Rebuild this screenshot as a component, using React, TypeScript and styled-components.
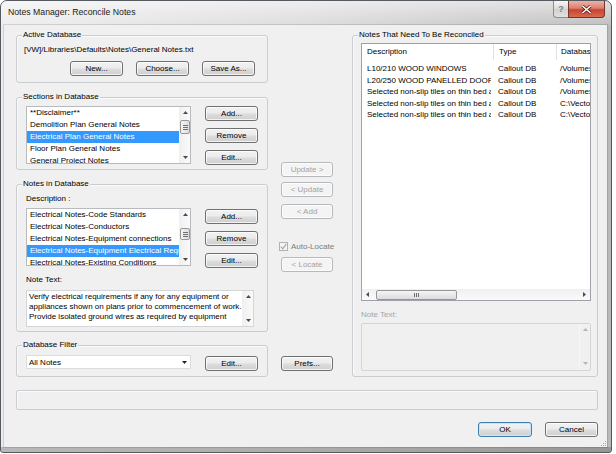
import React from 'react';
import styled, { createGlobalStyle } from 'styled-components';

const GlobalStyle = createGlobalStyle`
  html, body {
    margin: 0;
    padding: 0;
    background: #ffffff;
  }
  body {
    font-family: "Liberation Sans", Arial, sans-serif;
    font-size: 8px;
    color: #000;
  }
  * {
    box-sizing: border-box;
  }
`;

type Dir = 'up' | 'down' | 'left' | 'right';

const sections = [
  '**Disclaimer**',
  'Demolition Plan General Notes',
  'Electrical Plan General Notes',
  'Floor Plan General Notes',
  'General Project Notes',
];

const notes = [
  'Electrical Notes-Code Standards',
  'Electrical Notes-Conductors',
  'Electrical Notes-Equipment connections',
  'Electrical Notes-Equipment Electrical Requirements',
  'Electrical Notes-Existing Conditions',
];

const noteLines = [
  'Verify electrical requirements if any for any equipment or',
  'appliances shown on plans prior to commencement of work.',
  'Provide isolated ground wires as required by equipment',
];

const reconcile = [
  { desc: 'L10/210 WOOD WINDOWS', type: 'Callout DB', db: '/Volumes/Data/Notes.txt' },
  { desc: 'L20/250 WOOD PANELLED DOORS', type: 'Callout DB', db: '/Volumes/Data/Notes.txt' },
  { desc: 'Selected non-slip tiles on thin bed adhesive', type: 'Callout DB', db: '/Volumes/Data/Notes.txt' },
  { desc: 'Selected non-slip tiles on thin bed adhesive', type: 'Callout DB', db: 'C:\\Vectorworks\\Notes.txt' },
  { desc: 'Selected non-slip tiles on thin bed adhesive', type: 'Callout DB', db: 'C:\\Vectorworks\\Notes.txt' },
];

const Arrow = ({ dir, color = '#4a4a4a' }: { dir: Dir; color?: string }) => {
  const vertical = dir === 'up' || dir === 'down';
  const w = vertical ? 5 : 3;
  const h = vertical ? 3 : 5;
  const pts = {
    up: '0,3 5,3 2.5,0',
    down: '0,0 5,0 2.5,3',
    left: '3,0 3,5 0,2.5',
    right: '0,0 0,5 3,2.5',
  }[dir];
  return (
    <svg width={w} height={h} viewBox={`0 0 ${w} ${h}`}>
      <polygon points={pts} fill={color} />
    </svg>
  );
};

const Grip = ({ horizontal }: { horizontal?: boolean }) =>
  horizontal ? (
    <svg width="5" height="4" viewBox="0 0 5 4">
      <path d="M0.5 0v4M2.5 0v4M4.5 0v4" stroke="#6f6f6f" strokeWidth="1" />
    </svg>
  ) : (
    <svg width="5" height="5" viewBox="0 0 5 5">
      <path d="M0 0.5h5M0 2.5h5M0 4.5h5" stroke="#6f6f6f" strokeWidth="1" />
    </svg>
  );

const VScrollBar = ({ offset, size }: { offset?: number; size?: number }) => (
  <VScroll>
    <ArrowBox>
      <Arrow dir="up" />
    </ArrowBox>
    {size ? (
      <VThumb $offset={offset ?? 0} $size={size}>
        <Grip />
      </VThumb>
    ) : null}
    <Spacer />
    <ArrowBox>
      <Arrow dir="down" />
    </ArrowBox>
  </VScroll>
);

const App = () => {
  return (
    <>
      <GlobalStyle />
      <Window>
        <TitleBar>
          <Title>Notes Manager: Reconcile Notes</Title>
          <CaptionButtons>
            <HelpButton>?</HelpButton>
            <CloseButton>
              <svg width="11" height="9" viewBox="0 0 11 9">
                <path d="M1.5 1l8 7M9.5 1l-8 7" stroke="#5a1a12" strokeWidth="3" />
                <path d="M1.5 1l8 7M9.5 1l-8 7" stroke="#ffffff" strokeWidth="1.6" />
              </svg>
            </CloseButton>
          </CaptionButtons>
        </TitleBar>
        <Frame>
          <Body>
            <MainRow>
              <LeftColumn>
                <Group $h={48}>
                  <GroupTitle>Active Database</GroupTitle>
                  <ActiveInner>
                    <PathText>[VW]/Libraries\Defaults\Notes\General Notes.txt</PathText>
                    <ButtonRow>
                      <Button>New...</Button>
                      <Button>Choose...</Button>
                      <Button>Save As...</Button>
                    </ButtonRow>
                  </ActiveInner>
                </Group>

                <Group $h={73}>
                  <GroupTitle>Sections in Database</GroupTitle>
                  <GroupInner>
                    <ListRow>
                      <ListBox>
                        <Items>
                          {sections.map((s, i) => (
                            <Item key={s} $selected={i === 2}>
                              {s}
                            </Item>
                          ))}
                        </Items>
                        <VScrollBar offset={2} size={14} />
                      </ListBox>
                      <SideButtons>
                        <Button>Add...</Button>
                        <Button>Remove</Button>
                        <Button>Edit...</Button>
                      </SideButtons>
                    </ListRow>
                  </GroupInner>
                </Group>

                <Group $h={148}>
                  <GroupTitle>Notes in Database</GroupTitle>
                  <GroupInner>
                    <FieldLabel>Description :</FieldLabel>
                    <ListRow $top={3}>
                      <ListBox>
                        <Items>
                          {notes.map((n, i) => (
                            <Item key={n} $selected={i === 3}>
                              {n}
                            </Item>
                          ))}
                        </Items>
                        <VScrollBar offset={8} size={12} />
                      </ListBox>
                      <SideButtons $top={1}>
                        <Button>Add...</Button>
                        <Button>Remove</Button>
                        <Button>Edit...</Button>
                      </SideButtons>
                    </ListRow>
                    <FieldLabel $top={6}>Note Text:</FieldLabel>
                    <NoteBox>
                      <NoteText>
                        {noteLines.map(l => (
                          <NoteLine key={l}>{l}</NoteLine>
                        ))}
                      </NoteText>
                      <VScrollBar />
                    </NoteBox>
                  </GroupInner>
                </Group>

                <Group $h={32}>
                  <GroupTitle>Database Filter</GroupTitle>
                  <FilterInner>
                    <Select>
                      <span>All Notes</span>
                      <Arrow dir="down" color="#222" />
                    </Select>
                    <Button $top={1}>Edit...</Button>
                  </FilterInner>
                </Group>
              </LeftColumn>

              <MidColumn>
                <MidButton disabled>Update &gt;</MidButton>
                <MidButton disabled $top={5}>
                  &lt; Update
                </MidButton>
                <MidButton disabled $top={7}>
                  &lt; Add
                </MidButton>
                <CheckRow>
                  <CheckBox>
                    <svg width="7" height="7" viewBox="0 0 7 7">
                      <path d="M0.8 3.6l2 2.2L6.3 0.8" stroke="#a8a8a8" strokeWidth="1.2" fill="none" />
                    </svg>
                  </CheckBox>
                  <CheckLabel>Auto-Locate</CheckLabel>
                </CheckRow>
                <MidButton disabled $top={6}>
                  &lt; Locate
                </MidButton>
                <PrefsButton>Prefs...</PrefsButton>
              </MidColumn>

              <RightGroup>
                <GroupTitle>Notes That Need To Be Reconciled</GroupTitle>
                <ListView>
                  <HeaderRow>
                    <HeaderCell $w={132}>Description</HeaderCell>
                    <HeaderCell $w={63}>Type</HeaderCell>
                    <HeaderCell $pad={4}>Databas</HeaderCell>
                  </HeaderRow>
                  <Rows>
                    {reconcile.map((r, i) => (
                      <DataRow key={i}>
                        <DescCell>{r.desc}</DescCell>
                        <TypeCell>{r.type}</TypeCell>
                        <DbCell>{r.db}</DbCell>
                      </DataRow>
                    ))}
                  </Rows>
                  <HScroll>
                    <ArrowBox>
                      <Arrow dir="left" />
                    </ArrowBox>
                    <HThumb>
                      <Grip horizontal />
                    </HThumb>
                    <Spacer />
                    <ArrowBox>
                      <Arrow dir="right" />
                    </ArrowBox>
                  </HScroll>
                </ListView>
                <FieldLabel $top={8} $dim>
                  Note Text:
                </FieldLabel>
                <DisabledNote>
                  <Spacer />
                  <DisabledScroll>
                    <Arrow dir="up" color="#b4b4b4" />
                    <Arrow dir="down" color="#b4b4b4" />
                  </DisabledScroll>
                </DisabledNote>
              </RightGroup>
            </MainRow>

            <StatusBox />

            <Footer>
              <Button $w={54} $default>
                OK
              </Button>
              <Button>Cancel</Button>
            </Footer>

            <ResizeGrip>
              <svg width="7" height="7" viewBox="0 0 7 7">
                <g fill="#a9a9a9">
                  <rect x="5" y="1" width="1" height="1" />
                  <rect x="3" y="3" width="1" height="1" />
                  <rect x="5" y="3" width="1" height="1" />
                  <rect x="1" y="5" width="1" height="1" />
                  <rect x="3" y="5" width="1" height="1" />
                  <rect x="5" y="5" width="1" height="1" />
                </g>
              </svg>
            </ResizeGrip>
          </Body>
        </Frame>
      </Window>
    </>
  );
};

const Window = styled.div`
  width: 612px;
  height: 453px;
  border: 1px solid #555a60;
  border-radius: 7px 7px 3px 3px;
  overflow: hidden;
  display: flex;
  flex-direction: column;
  background: linear-gradient(to right, #ececec 0%, #d9d9d9 50%, #b9b9b9 100%);
`;

const TitleBar = styled.div`
  height: 24px;
  display: flex;
  align-items: flex-start;
  padding-left: 7px;
  background: linear-gradient(rgba(255, 255, 255, 0.55), rgba(255, 255, 255, 0.1));
`;

const Title = styled.div`
  font-size: 8.7px;
  line-height: 23px;
  color: #1a1a1a;
`;

const CaptionButtons = styled.div`
  margin-left: auto;
  margin-right: 6px;
  display: flex;
`;

const HelpButton = styled.div`
  width: 15px;
  height: 17px;
  border: 1px solid #8c8c8c;
  border-top: none;
  border-right: none;
  border-radius: 0 0 0 4px;
  background: linear-gradient(#f7f7f7, #dadada 50%, #cfcfcf 51%, #e2e2e2);
  color: #7d7d7d;
  font-weight: bold;
  font-size: 9px;
  line-height: 16px;
  text-align: center;
`;

const CloseButton = styled.div`
  width: 37px;
  height: 17px;
  border: 1px solid #7a3328;
  border-top: none;
  border-radius: 0 0 4px 0;
  background: linear-gradient(#ebb3a8 0%, #dc7f6d 45%, #c8432f 55%, #d66a52 100%);
  display: flex;
  align-items: center;
  justify-content: center;
`;

const Frame = styled.div`
  flex: 1;
  padding: 0 4px 5px 3px;
  box-shadow: inset 0 -5px 0 rgba(90, 90, 90, 0.35);
`;

const Body = styled.div`
  position: relative;
  height: 100%;
  background: #f0f0f0;
  box-shadow: 0 0 0 1px rgba(0, 0, 0, 0.12);
  padding: 10px 9px 10px 12px;
  display: flex;
  flex-direction: column;
`;

const MainRow = styled.div`
  display: flex;
  height: 342px;
`;

const LeftColumn = styled.div`
  width: 252px;
  display: flex;
  flex-direction: column;
  gap: 14px;

  & > :last-child {
    margin-top: -1px;
  }
`;

const Group = styled.div<{ $h: number }>`
  position: relative;
  height: ${p => p.$h}px;
  border: 1px solid #c9ccd0;
  border-radius: 3px;
  box-shadow: inset 1px 1px 0 #fbfbfb;
`;

const GroupTitle = styled.span`
  position: absolute;
  top: -7px;
  left: 5px;
  padding: 0 1px;
  line-height: 12px;
  background: #f0f0f0;
  white-space: nowrap;
`;

const ActiveInner = styled.div`
  padding: 8px 0 0 7px;
`;

const PathText = styled.div`
  line-height: 12px;
  white-space: nowrap;
`;

const ButtonRow = styled.div`
  display: flex;
  gap: 13px;
  margin: 5px 0 0 46px;
`;

const Button = styled.button<{ $w?: number; $top?: number; $default?: boolean }>`
  width: ${p => p.$w ?? 53}px;
  height: 15px;
  margin-top: ${p => p.$top ?? 0}px;
  padding: 0;
  flex-shrink: 0;
  font: inherit;
  line-height: 13px;
  color: #000;
  border: 1px solid ${p => (p.$default ? '#3c7fb1' : '#707070')};
  border-radius: 3px;
  background: linear-gradient(#f2f2f2 0%, #ebebeb 48%, #dddddd 52%, #cfcfcf 100%);
  box-shadow: inset 0 0 0 1px ${p => (p.$default ? '#c6e6f8' : 'rgba(255, 255, 255, 0.75)')};

  &:disabled {
    color: #a3a3a3;
    border-color: #b5b9bc;
    background: #f4f4f4;
    box-shadow: inset 0 0 0 1px #fcfcfc;
  }
`;

const GroupInner = styled.div`
  padding: 8px 0 0 9px;
`;

const ListRow = styled.div<{ $top?: number }>`
  display: flex;
  gap: 14px;
  margin-top: ${p => p.$top ?? 0}px;
`;

const ListBox = styled.div`
  width: 165px;
  height: 58px;
  border: 1px solid #b7bbc0;
  background: #fff;
  display: flex;
  overflow: hidden;
`;

const Items = styled.div`
  flex: 1;
  min-width: 0;
  overflow: hidden;
`;

const Item = styled.div<{ $selected?: boolean }>`
  height: 12px;
  line-height: 12px;
  padding-left: 3px;
  white-space: nowrap;
  overflow: hidden;
  background: ${p => (p.$selected ? '#3399ff' : 'transparent')};
  color: ${p => (p.$selected ? '#fff' : '#000')};
`;

const VScroll = styled.div`
  width: 11px;
  display: flex;
  flex-direction: column;
  align-items: center;
  background: linear-gradient(to right, #f0f0f0, #fafafa);
  border-left: 1px solid #f0f0f0;
`;

const ArrowBox = styled.div`
  width: 11px;
  height: 11px;
  flex-shrink: 0;
  display: flex;
  align-items: center;
  justify-content: center;
`;

const VThumb = styled.div<{ $offset: number; $size: number }>`
  width: 10px;
  height: ${p => p.$size}px;
  margin-top: ${p => p.$offset}px;
  border: 1px solid #979797;
  border-radius: 2px;
  background: linear-gradient(to right, #f5f5f5, #dcdcdc);
  display: flex;
  align-items: center;
  justify-content: center;
`;

const Spacer = styled.div`
  flex: 1;
`;

const SideButtons = styled.div<{ $top?: number }>`
  display: flex;
  flex-direction: column;
  gap: 7px;
  margin-top: ${p => p.$top ?? 0}px;
`;

const FieldLabel = styled.div<{ $top?: number; $dim?: boolean }>`
  line-height: 12px;
  margin-top: ${p => p.$top ?? 0}px;
  color: ${p => (p.$dim ? '#a6a6a6' : '#000')};
`;

const NoteBox = styled.div`
  width: 228px;
  height: 37px;
  margin-top: 4px;
  border: 1px solid #d3d5d8;
  background: #fff;
  display: flex;
`;

const NoteText = styled.div`
  flex: 1;
  min-width: 0;
  padding: 1px 0 0 2px;
  overflow: hidden;
`;

const NoteLine = styled.div`
  line-height: 9.75px;
  white-space: nowrap;
`;

const FilterInner = styled.div`
  display: flex;
  align-items: flex-start;
  gap: 14px;
  padding: 9px 0 0 9px;
`;

const Select = styled.div`
  width: 165px;
  height: 14px;
  border: 1px solid #dcdcdc;
  background: #fff;
  display: flex;
  align-items: center;
  justify-content: space-between;
  padding: 0 3px 0 2px;
`;

const MidColumn = styled.div`
  width: 84px;
  display: flex;
  flex-direction: column;
  align-items: flex-start;
  padding: 127px 0 6px 11px;
`;

const MidButton = styled(Button)`
  width: 52px;
  margin-left: 2px;
`;

const CheckRow = styled.div`
  display: flex;
  align-items: center;
  gap: 3px;
  height: 9px;
  margin-top: 23px;
`;

const CheckBox = styled.div`
  width: 9px;
  height: 9px;
  border: 1px solid #b1b1b1;
  background: #f4f4f4;
  display: flex;
  align-items: center;
  justify-content: center;
`;

const CheckLabel = styled.span`
  color: #7b7b7b;
  white-space: nowrap;
`;

const PrefsButton = styled(MidButton)`
  margin-top: auto;
`;

const RightGroup = styled(Group).attrs({ $h: 342 })`
  width: 246px;
  padding: 7px 0 0 8px;
`;

const ListView = styled.div`
  width: 230px;
  height: 258px;
  border: 1px solid #9ea2a8;
  background: #fff;
  display: flex;
  flex-direction: column;
  overflow: hidden;
`;

const HeaderRow = styled.div`
  height: 16px;
  display: flex;
  flex-shrink: 0;
`;

const HeaderCell = styled.div<{ $w?: number; $pad?: number }>`
  width: ${p => (p.$w ? `${p.$w}px` : 'auto')};
  flex: ${p => (p.$w ? '0 0 auto' : '1')};
  padding-left: ${p => p.$pad ?? 5}px;
  line-height: 16px;
  white-space: nowrap;
  overflow: hidden;
  border-right: ${p => (p.$w ? '1px solid #dfe3e8' : 'none')};
`;

const Rows = styled.div`
  flex: 1;
  padding-top: 3px;
`;

const DataRow = styled.div`
  height: 11.5px;
  line-height: 11.5px;
  display: flex;
  white-space: nowrap;
`;

const DescCell = styled.div`
  width: 129px;
  margin-right: 3px;
  padding-left: 5px;
  overflow: hidden;
`;

const TypeCell = styled.div`
  width: 63px;
  padding-left: 4px;
  overflow: hidden;
`;

const DbCell = styled.div`
  flex: 1;
  padding-left: 3px;
  overflow: hidden;
`;

const HScroll = styled.div`
  height: 11px;
  flex-shrink: 0;
  display: flex;
  align-items: center;
  background: linear-gradient(#f0f0f0, #fafafa);
`;

const HThumb = styled.div`
  width: 81px;
  height: 10px;
  margin-left: 3px;
  border: 1px solid #979797;
  border-radius: 2px;
  background: linear-gradient(#f5f5f5, #dcdcdc);
  display: flex;
  align-items: center;
  justify-content: center;
`;

const DisabledNote = styled.div`
  width: 230px;
  height: 48px;
  margin-top: 2px;
  border: 1px solid #d5d5d5;
  border-radius: 2px;
  background: #f0f0f0;
  display: flex;
`;

const DisabledScroll = styled.div`
  width: 11px;
  display: flex;
  flex-direction: column;
  align-items: center;
  justify-content: space-between;
  padding: 4px 0 5px;
  border-left: 1px solid #f6f6f6;
`;

const StatusBox = styled.div`
  margin-top: 13px;
  height: 20px;
  border: 1px solid #c9ccd0;
  border-radius: 2px;
  box-shadow: inset 1px 1px 0 #fbfbfb;
`;

const Footer = styled.div`
  margin-top: 12px;
  display: flex;
  justify-content: flex-end;
  gap: 13px;
`;

const ResizeGrip = styled.div`
  position: absolute;
  right: 0;
  bottom: 0;
  width: 7px;
  height: 7px;
  display: flex;
`;

export default App;
